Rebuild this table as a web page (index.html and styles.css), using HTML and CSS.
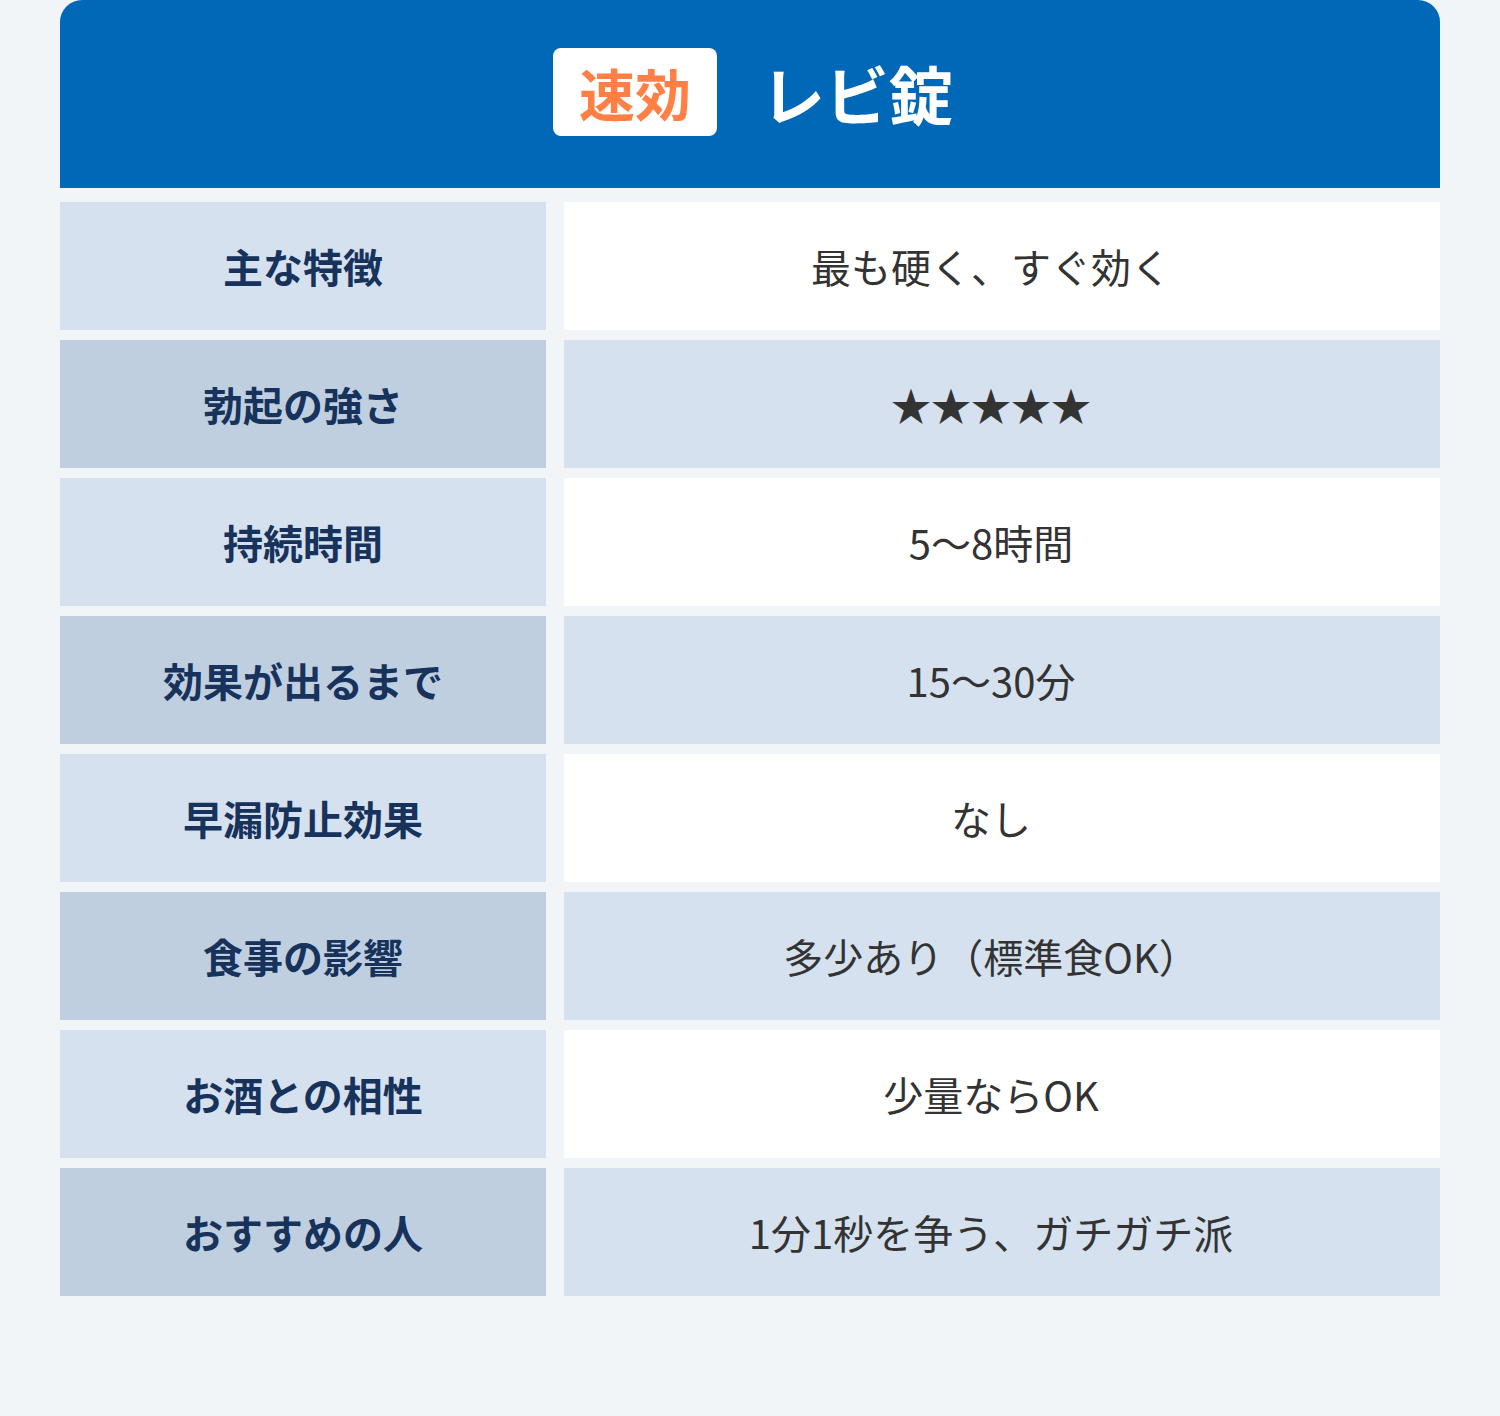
FILE: index.html
```html
<!DOCTYPE html>
<html lang="ja">
<head>
<meta charset="utf-8">
<link rel="stylesheet" href="styles.css">
</head>
<body>
<div class="wrap">
  <div class="header">
    <span class="badge">速効</span>
    <h1 class="title">レビ錠</h1>
  </div>
  <div class="table">
    <div class="row odd"><div class="label">主な特徴</div><div class="value">最も硬く、すぐ効く</div></div>
    <div class="row even"><div class="label">勃起の強さ</div><div class="value">★★★★★</div></div>
    <div class="row odd"><div class="label">持続時間</div><div class="value">5〜8時間</div></div>
    <div class="row even"><div class="label">効果が出るまで</div><div class="value">15〜30分</div></div>
    <div class="row odd"><div class="label">早漏防止効果</div><div class="value">なし</div></div>
    <div class="row even"><div class="label">食事の影響</div><div class="value">多少あり（標準食OK）</div></div>
    <div class="row odd"><div class="label">お酒との相性</div><div class="value">少量ならOK</div></div>
    <div class="row even"><div class="label">おすすめの人</div><div class="value">1分1秒を争う、ガチガチ派</div></div>
  </div>
</div>
</body>
</html>
```

FILE: styles.css
```css
html, body {
  margin: 0;
  padding: 0;
  background: #f2f5f7;
}
body {
  font-family: "Noto Sans CJK JP", "Noto Sans", sans-serif;
  width: 1500px;
  height: 1416px;
}
.wrap {
  padding: 0 60px;
}
.header {
  background: #0068b7;
  height: 188px;
  border-radius: 22px 22px 0 0;
  display: flex;
  align-items: center;
  justify-content: center;
  gap: 44px;
  padding-bottom: 4px;
  padding-left: 6px;
  box-sizing: border-box;
}
.badge {
  background: #ffffff;
  color: #ff7f45;
  font-weight: 700;
  font-size: 56px;
  line-height: 88px;
  height: 88px;
  padding: 0 26px;
  border-radius: 8px;
  box-sizing: border-box;
}
.title {
  margin: 0;
  color: #ffffff;
  font-size: 64px;
  font-weight: 700;
  line-height: 1;
}
.table {
  display: flex;
  flex-direction: column;
  gap: 10px;
  margin-top: 14px;
}
.row {
  display: grid;
  grid-template-columns: 486px 1fr;
  column-gap: 18px;
  height: 128px;
}
.label, .value {
  display: flex;
  align-items: center;
  justify-content: center;
  font-size: 40px;
  line-height: 1;
}
.label {
  color: #17325b;
  font-weight: 700;
}
.value {
  color: #333333;
  font-weight: 400;
  padding-right: 22px;
}
.odd .label { background: #d5e1ee; }
.odd .value { background: #ffffff; }
.even .label { background: #bfcfe0; }
.even .value { background: #d5e1ee; }
```
